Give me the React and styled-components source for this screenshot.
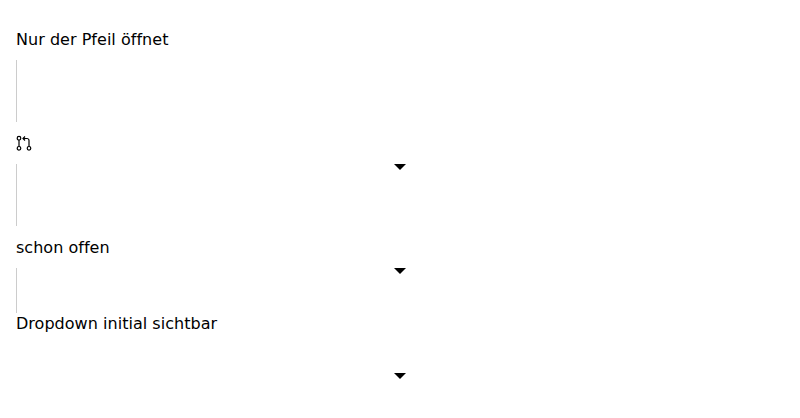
import React from 'react'
import styled, { createGlobalStyle } from 'styled-components'

const GlobalStyle = createGlobalStyle`
  html, body {
    margin: 0;
    padding: 0;
    background: #fff;
  }
  body {
    font-family: "DejaVu Sans", sans-serif;
    font-size: 16px;
    color: #000;
  }
`

const Page = styled.div`
  display: flex;
  flex-direction: column;
  height: 418px;
  padding: 29px 16px 0;
  box-sizing: border-box;
  overflow: hidden;
`

const Label = styled.div`
  height: 21px;
  line-height: 21px;
  letter-spacing: 0.03px;
  white-space: nowrap;
`

const IconRow = styled.div`
  display: flex;
  align-items: center;
  height: 22px;
`

const Panel = styled.div`
  display: flex;
  justify-content: center;
  height: ${(p) => p.$height}px;
  margin-top: ${(p) => p.$top}px;
  margin-bottom: ${(p) => p.$bottom}px;
  box-sizing: border-box;
  box-shadow: ${(p) => (p.$rule ? 'inset 1px 0 0 #ccc' : 'none')};
`

const Arrow = styled.span`
  display: block;
  width: 0;
  height: 0;
  border-left: 6px solid transparent;
  border-right: 6px solid transparent;
  border-top: 6px solid #000;
`

function PullRequestIcon() {
  return (
    <svg width="16" height="16" viewBox="0 0 16 16" fill="none" stroke="#000" strokeWidth="1.2">
      <circle cx="3" cy="3.2" r="1.8" />
      <circle cx="3" cy="13.3" r="1.8" />
      <circle cx="13" cy="13.3" r="1.8" />
      <path d="M3 5v6.5" />
      <path d="M13 11.5V5.5a2 2 0 0 0-2-2H7" />
      <path d="M9 1.5l-2 2 2 2" />
    </svg>
  )
}

export default function App() {
  return (
    <Page>
      <GlobalStyle />
      <Label>Nur der Pfeil öffnet</Label>
      <Panel $rule $height={62} $top={10} $bottom={10} />
      <IconRow><PullRequestIcon /></IconRow>
      <Panel $rule $height={62} $top={10} $bottom={11}><Arrow /></Panel>
      <Label>schon offen</Label>
      <Panel $rule $height={45} $top={10} $bottom={0}><Arrow /></Panel>
      <Label>Dropdown initial sichtbar</Label>
      <Panel $height={40} $top={39} $bottom={0}><Arrow /></Panel>
    </Page>
  )
}
